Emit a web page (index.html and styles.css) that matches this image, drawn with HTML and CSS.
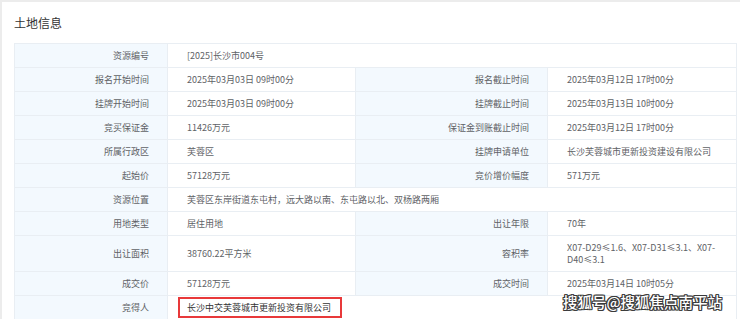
FILE: index.html
```html
<!DOCTYPE html>
<html lang="zh-CN">
<head>
<meta charset="utf-8">
<title>土地信息</title>
<link rel="stylesheet" href="styles.css">
</head>
<body>
<div class="panel">
  <div class="title">土地信息</div>
  <table class="info">
    <colgroup>
      <col class="c-label1"><col class="c-val1"><col class="c-label2"><col class="c-val2">
    </colgroup>
    <tbody>
      <tr><th>资源编号</th><td colspan="3">[2025]长沙市004号</td></tr>
      <tr><th>报名开始时间</th><td>2025年03月03日 09时00分</td><th>报名截止时间</th><td>2025年03月12日 17时00分</td></tr>
      <tr><th>挂牌开始时间</th><td>2025年03月03日 09时00分</td><th>挂牌截止时间</th><td>2025年03月13日 10时00分</td></tr>
      <tr><th>竞买保证金</th><td>11426万元</td><th>保证金到账截止时间</th><td>2025年03月12日 17时00分</td></tr>
      <tr><th>所属行政区</th><td>芙蓉区</td><th>挂牌申请单位</th><td>长沙芙蓉城市更新投资建设有限公司</td></tr>
      <tr><th>起始价</th><td>57128万元</td><th>竞价增价幅度</th><td>571万元</td></tr>
      <tr><th>资源位置</th><td colspan="3">芙蓉区东岸街道东屯村，远大路以南、东屯路以北、双杨路两厢</td></tr>
      <tr><th>用地类型</th><td>居住用地</td><th>出让年限</th><td>70年</td></tr>
      <tr class="tall"><th>出让面积</th><td>38760.22平方米</td><th>容积率</th><td>X07-D29≤1.6、X07-D31≤3.1、X07-D40≤3.1</td></tr>
      <tr><th>成交价</th><td>57128万元</td><th>成交时间</th><td>2025年03月14日 10时05分</td></tr>
      <tr><th>竞得人</th><td colspan="3"><span class="mark">长沙中交芙蓉城市更新投资有限公司</span></td></tr>
    </tbody>
  </table>
  <div class="watermark">搜狐号@搜狐焦点南平站</div>
</div>
</body>
</html>
```

FILE: styles.css
```css
html, body {
  margin: 0;
  padding: 0;
}
body {
  background: #ececec;
  width: 740px;
  height: 319px;
  overflow: hidden;
  font-family: "Noto Sans CJK SC", "Noto Sans", sans-serif;
}
.panel {
  position: relative;
  margin: 2px 0 0 2px;
  background: #ffffff;
  padding: 0 4px 0 12px;
  height: 317px;
}
.title {
  height: 41px;
  line-height: 41px;
  font-size: 12px;
  color: #333333;
}
.info {
  width: 722px;
  table-layout: fixed;
  border-collapse: collapse;
  font-size: 9px;
  color: #606266;
}
.c-label1 { width: 153px; }
.c-val1 { width: 188px; }
.c-label2 { width: 192px; }
.c-val2 { width: 189px; }
.info tr {
  height: 24px;
}
.info tr.tall {
  height: 36px;
}
.info th,
.info td {
  border: 1px solid #e9eef3;
  padding: 0;
  line-height: 12px;
  vertical-align: middle;
}
.info th {
  background: #f3f9fe;
  font-weight: normal;
  text-align: right;
  padding-right: 18px;
}
.info td {
  background: #ffffff;
  text-align: left;
  padding-left: 19px;
  padding-right: 8px;
}
.mark {
  display: inline-block;
  margin-left: -9px;
  padding: 0 9px 0 7px;
  line-height: 17px;
  border: 2px solid #e8393a;
  color: #333333;
}
.watermark {
  position: absolute;
  left: 561px;
  top: 289px;
  font-size: 14.5px;
  font-weight: 500;
  color: #ffffff;
  letter-spacing: 0;
  text-shadow: 1px 0 0 #3a3a3a, -1px 0 0 #3a3a3a, 0 1px 0 #3a3a3a, 0 -1px 0 #3a3a3a,
    1px 1px 0 #3a3a3a, -1px -1px 0 #3a3a3a, 1px -1px 0 #3a3a3a, -1px 1px 0 #3a3a3a;
}
```
